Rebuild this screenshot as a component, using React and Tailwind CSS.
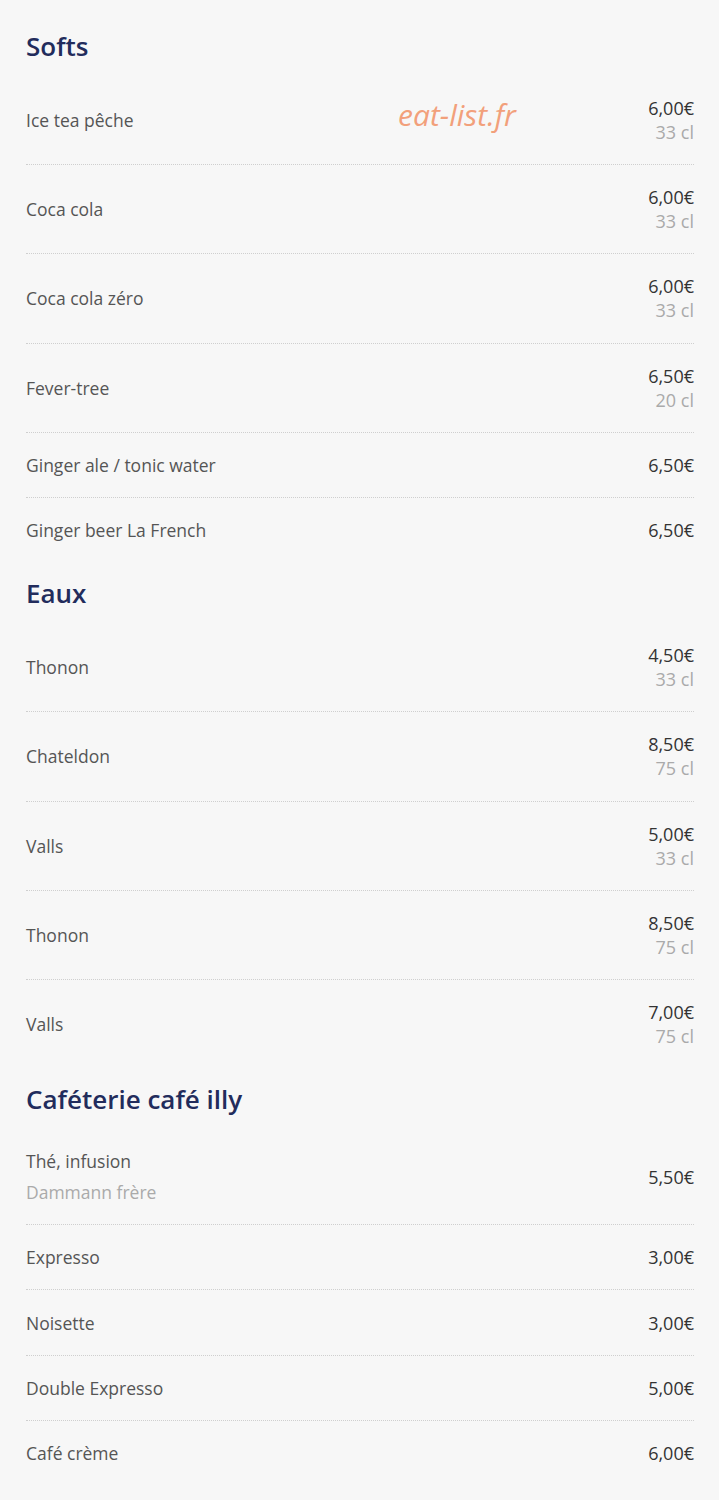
const sections = [
  {
    title: "Softs",
    items: [
      { name: "Ice tea pêche", price: "6,00€", size: "33 cl" },
      { name: "Coca cola", price: "6,00€", size: "33 cl" },
      { name: "Coca cola zéro", price: "6,00€", size: "33 cl" },
      { name: "Fever-tree", price: "6,50€", size: "20 cl" },
      { name: "Ginger ale / tonic water", price: "6,50€" },
      { name: "Ginger beer La French", price: "6,50€" },
    ],
  },
  {
    title: "Eaux",
    items: [
      { name: "Thonon", price: "4,50€", size: "33 cl" },
      { name: "Chateldon", price: "8,50€", size: "75 cl" },
      { name: "Valls", price: "5,00€", size: "33 cl" },
      { name: "Thonon", price: "8,50€", size: "75 cl" },
      { name: "Valls", price: "7,00€", size: "75 cl" },
    ],
  },
  {
    title: "Caféterie café illy",
    items: [
      { name: "Thé, infusion", desc: "Dammann frère", price: "5,50€" },
      { name: "Expresso", price: "3,00€" },
      { name: "Noisette", price: "3,00€" },
      { name: "Double Expresso", price: "5,00€" },
      { name: "Café crème", price: "6,00€" },
    ],
  },
];

function Row({ item, last }) {
  return (
    <div
      className={
        "flex items-center justify-between py-[20.1px] " +
        (last ? "" : "border-b border-dotted border-[#cfcfcf]")
      }
    >
      <div className="flex flex-col">
        <span className="text-[17.5px] leading-[24px] text-[#555]">{item.name}</span>
        {item.desc && (
          <span className="mt-[7px] text-[17.5px] leading-[24px] text-[#aaa]">{item.desc}</span>
        )}
      </div>
      <div className="flex flex-col items-end">
        <span className="text-[18px] leading-[24px] text-[#333]">{item.price}</span>
        {item.size && (
          <span className="text-[18px] leading-[24px] text-[#aaa]">{item.size}</span>
        )}
      </div>
    </div>
  );
}

export default function App() {
  return (
    <div
      className="relative min-h-screen bg-[#f7f7f7] pl-[26px] pr-[25px] pt-[15px] pb-4"
      style={{ fontFamily: '"Open Sans", "Noto Sans", sans-serif' }}
    >
      <div className="pointer-events-none absolute left-[398px] top-[96px] text-[30px] italic leading-[38px] text-[#f2a07b]">
        eat-list.fr
      </div>
      {sections.map((s) => (
        <section key={s.title}>
          <h2 className="mt-[16px] mb-[15px] text-[26px] font-semibold leading-[30px] text-[#222c5c]">
            {s.title}
          </h2>
          {s.items.map((it, i) => (
            <Row key={i} item={it} last={i === s.items.length - 1} />
          ))}
        </section>
      ))}
    </div>
  );
}
